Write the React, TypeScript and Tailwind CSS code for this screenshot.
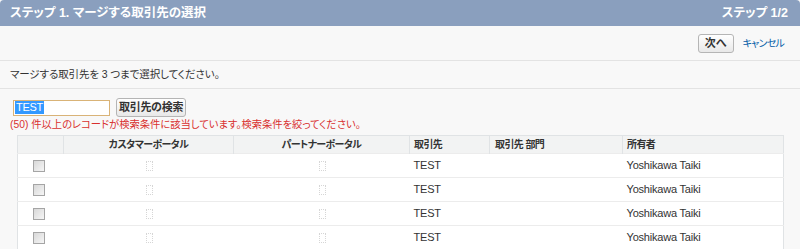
import React from "react";

const rows = [1, 2, 3, 4];

const jp = "font-['Liberation_Sans','Noto_Sans_CJK_JP',sans-serif]";

const BigCheck = () => (
  <span className="inline-block w-[12px] h-[12px] border border-[#a5a5a5] bg-gradient-to-br from-[#d8d8d8] to-[#f6f6f6] align-middle" />
);

const SmallCheck = () => (
  <span className="inline-block w-[7px] h-[10px] border border-dotted border-[#d6d6d6] bg-white align-middle" />
);

const App = () => {
  return (
    <div className={`w-[800px] h-[249px] overflow-hidden bg-[#f8f8f8] text-[#333] ${jp}`}>
      <div className="h-[26px] bg-[#8a9fbe] rounded-t-[4px] flex items-center justify-between px-[10px] text-white font-bold text-[12.5px] [font-feature-settings:'palt']">
        <span>ステップ 1. マージする取引先の選択</span>
        <span className="mr-[2px]">ステップ 1/2</span>
      </div>

      <div className="h-[35px] flex items-center justify-end pr-[16px] gap-[9px] border-b border-[#e3e3e3]">
        <button
          type="button"
          className="h-[19px] w-[36px] mt-[1px] border border-[#b5b5b5] rounded-[3px] bg-gradient-to-b from-white to-[#e8e8e8] text-[11px] font-bold leading-none"
        >
          次へ
        </button>
        <a className="text-[10px] tracking-[-0.8px] text-[#015ba7] [font-feature-settings:'palt'] mt-[1px]">キャンセル</a>
      </div>

      <div className="h-[28px] flex items-center px-[10px] border-b border-[#e3e3e3] text-[10.5px] tracking-[-0.1px] [font-feature-settings:'palt']">
        マージする取引先を 3 つまで選択してください。
      </div>

      <div className="pl-[13px] pt-[9px] flex items-center gap-[6px]">
        <div className="w-[97px] h-[16px] border border-[#d9b377] bg-white flex items-center pl-[1px]">
          <span className="bg-[#3399ff] text-white text-[11px] leading-[13px] px-[1px] tracking-[-0.3px]">TEST</span>
        </div>
        <button
          type="button"
          className="h-[19px] px-[2px] border border-[#b5b5b5] rounded-[3px] bg-gradient-to-b from-white to-[#e8e8e8] text-[11px] font-bold leading-none tracking-[-0.3px]"
        >
          取引先の検索
        </button>
      </div>

      <div className="pl-[10px] mt-[1px] text-[10.3px] leading-[14px] text-[#d8302f] [font-feature-settings:'palt']">
        (50) 件以上のレコードが検索条件に該当しています。検索条件を絞ってください。
      </div>

      <div className="pl-[17px] mt-[3px]">
        <table className="w-[766px] table-fixed border-collapse border border-[#e0e3e5] bg-white text-[11px]">
          <colgroup>
            <col className="w-[46px]" />
            <col className="w-[170px]" />
            <col className="w-[176px]" />
            <col className="w-[80px]" />
            <col className="w-[133px]" />
            <col className="w-[161px]" />
          </colgroup>
          <thead>
            <tr className="h-[18px] bg-[#f2f3f3] font-bold text-[10px] tracking-[-0.6px] [font-feature-settings:'palt']">
              <th className="p-0 border-r border-[#e0e3e5]" />
              <th className="p-0 border-r border-[#e0e3e5] text-center">カスタマーポータル</th>
              <th className="p-0 border-r border-[#e0e3e5] text-center">パートナーポータル</th>
              <th className="p-0 border-r border-[#e0e3e5] text-left pl-[4px]">取引先</th>
              <th className="p-0 border-r border-[#e0e3e5] text-left pl-[5px]">取引先 部門</th>
              <th className="p-0 text-left pl-[4px]">所有者</th>
            </tr>
          </thead>
          <tbody>
            {rows.map((r) => (
              <tr key={r} className="h-[24px] border-t border-[#ececec] tracking-[-0.2px]">
                <td className="p-0 text-center pr-[4px]">
                  <BigCheck />
                </td>
                <td className="p-0 text-center pl-[2px]">
                  <SmallCheck />
                </td>
                <td className="p-0 text-center pl-[1px]">
                  <SmallCheck />
                </td>
                <td className="p-0 pl-[4px]">TEST</td>
                <td className="p-0" />
                <td className="p-0 pl-[4px]">Yoshikawa Taiki</td>
              </tr>
            ))}
          </tbody>
        </table>
      </div>
    </div>
  );
};

export default App;
